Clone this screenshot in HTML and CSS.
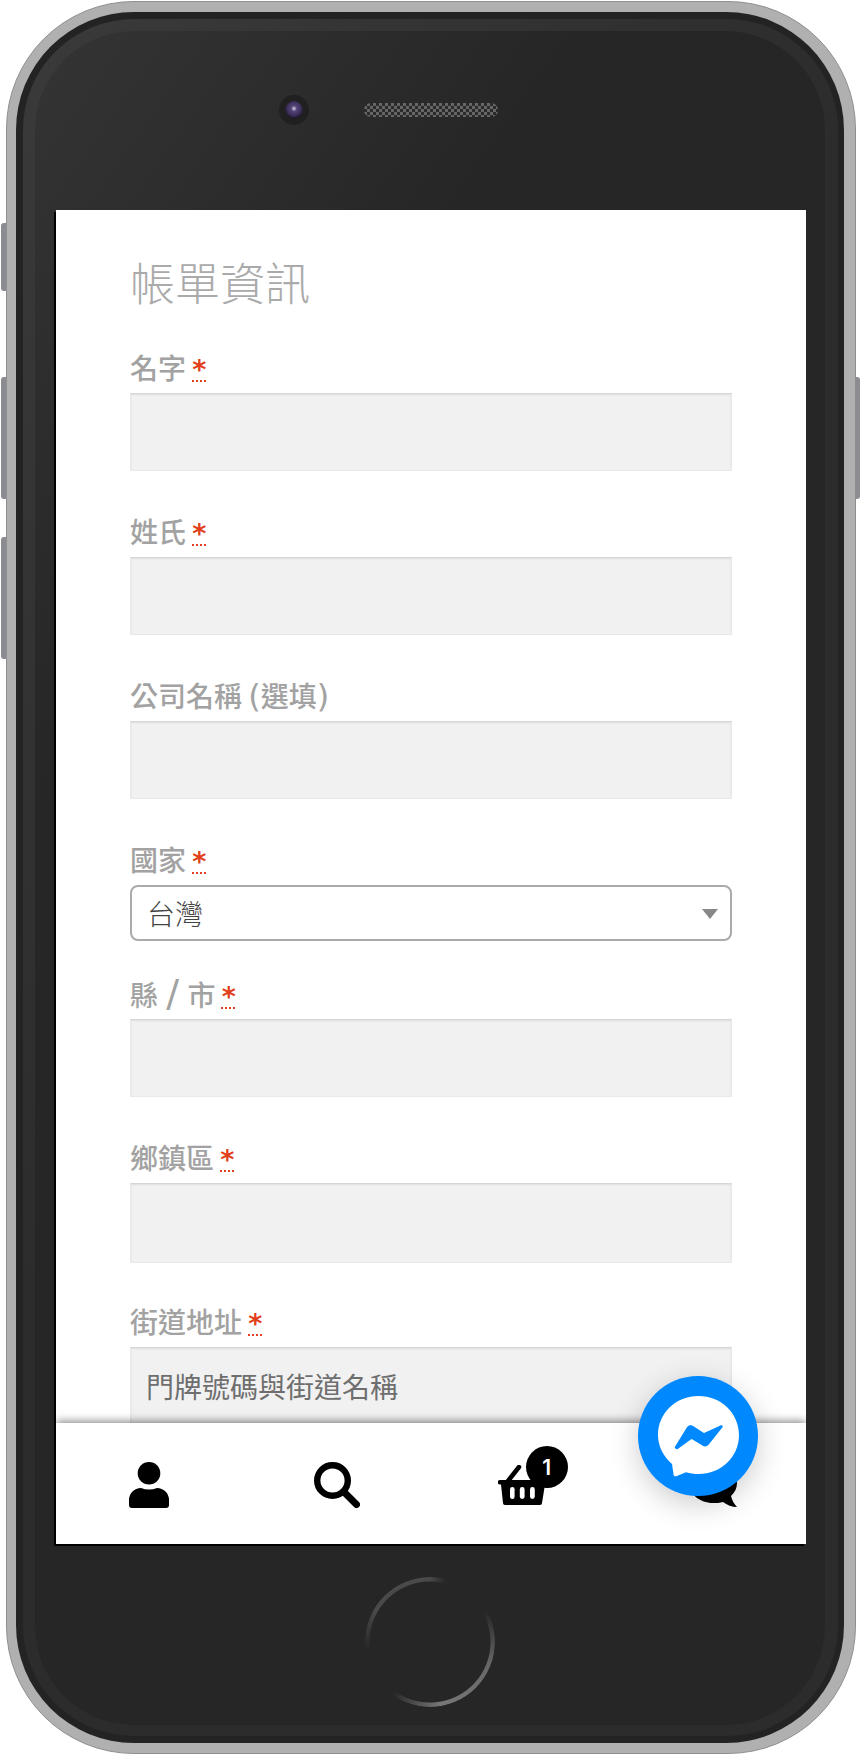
FILE: index.html
```html
<!DOCTYPE html>
<html lang="zh-Hant">
<head>
    <meta charset="UTF-8">
    <meta name="viewport" content="width=device-width, initial-scale=1.0">
    <title>帳單資訊</title>
    <link rel="stylesheet" href="styles.css">
</head>
<body>
    <div class="phone">
        <span class="side-btn side-btn-mute"></span>
        <span class="side-btn side-btn-up"></span>
        <span class="side-btn side-btn-down"></span>
        <span class="side-btn side-btn-power"></span>

        <div class="bezel">
            <div class="bezel-ring">
                <div class="face">
                    <div class="sensors">
                        <div class="camera"><span class="camera-lens"></span></div>
                        <div class="speaker"></div>
                    </div>

                    <div class="screen">
                        <form class="billing-form">
                            <h1 class="form-title">帳單資訊</h1>

                            <div class="form-group">
                                <label class="form-label" for="firstName">名字 <abbr class="required" title="必填">*</abbr></label>
                                <input class="form-input" id="firstName" type="text">
                            </div>

                            <div class="form-group">
                                <label class="form-label" for="lastName">姓氏 <abbr class="required" title="必填">*</abbr></label>
                                <input class="form-input" id="lastName" type="text">
                            </div>

                            <div class="form-group">
                                <label class="form-label" for="company">公司名稱 <span class="symbol">(</span>選填<span class="symbol">)</span></label>
                                <input class="form-input" id="company" type="text">
                            </div>

                            <div class="form-group form-group-select">
                                <label class="form-label" for="country">國家 <abbr class="required" title="必填">*</abbr></label>
                                <div class="select-wrap">
                                    <select class="form-select" id="country">
                                        <option>台灣</option>
                                    </select>
                                </div>
                            </div>

                            <div class="form-group">
                                <label class="form-label" for="county">縣 <span class="symbol symbol-slash">/</span> 市 <abbr class="required" title="必填">*</abbr></label>
                                <input class="form-input" id="county" type="text">
                            </div>

                            <div class="form-group form-group-tall">
                                <label class="form-label" for="district">鄉鎮區 <abbr class="required" title="必填">*</abbr></label>
                                <input class="form-input" id="district" type="text">
                            </div>

                            <div class="form-group">
                                <label class="form-label" for="address">街道地址 <abbr class="required" title="必填">*</abbr></label>
                                <input class="form-input" id="address" type="text" placeholder="門牌號碼與街道名稱">
                            </div>
                        </form>

                        <nav class="bottom-nav">
                            <a class="nav-item" href="#">
                                <svg width="40" height="46" viewBox="0 0 40 46">
                                    <circle cx="20" cy="11.3" r="11.3"/>
                                    <path d="M12 26Q20 29 28 26A12 12 0 0 1 40 38V43A3 3 0 0 1 37 46H3A3 3 0 0 1 0 43V38A12 12 0 0 1 12 26Z"/>
                                </svg>
                            </a>
                            <a class="nav-item nav-item-shift" href="#">
                                <svg width="46" height="46" viewBox="0 0 46 46" fill="none" stroke="#000">
                                    <circle cx="18.5" cy="18.5" r="15.3" stroke-width="6.4"/>
                                    <path d="M31 31L42.5 42.5" stroke-width="7" stroke-linecap="round"/>
                                </svg>
                            </a>
                            <a class="nav-item nav-item-cart" href="#">
                                <span class="cart-icon">
                                    <svg width="50" height="40" viewBox="0 0 50 40">
                                        <path d="M21 2L10 16" fill="none" stroke="#000" stroke-width="4.5" stroke-linecap="round"/>
                                        <path d="M2 15H48A2 2 0 0 1 48 19.500H47L44 38A2 2 0 0 1 42 40H7A2 2 0 0 1 5 38L3 19.500H2A2 2 0 0 1 2 15Z"/>
                                        <rect x="12" y="22" width="4.600" height="12" rx="2.300" fill="#fff"/>
                                        <rect x="21.800" y="22" width="4.800" height="12" rx="2.400" fill="#fff"/>
                                        <rect x="32" y="22" width="4.800" height="12" rx="2.400" fill="#fff"/>
                                    </svg>
                                    <span class="cart-badge">1</span>
                                </span>
                            </a>
                            <a class="nav-item nav-item-shift" href="#">
                                <svg width="48" height="43" viewBox="0 0 48 43">
                                    <path d="M24 0C37 0 48 8 48 19C48 24 46 28 42 32C43 36 45 40 48 43C43 43 38 41 34 38C31 39 27 39 24 39C11 39 0 30 0 19C0 8 11 0 24 0Z"/>
                                </svg>
                            </a>
                        </nav>

                        <a class="messenger-btn" href="#">
                            <svg width="81" height="81" viewBox="0 0 81 81">
                                <path d="M40.500 0C63 0 81 17 81 39C81 61 63 78 40.500 78C36 78 32 77.300 28 76.200L19 80C17 80.800 15.500 80 15.500 78L14 68C5.500 60.500 0 50.500 0 39C0 17 18 0 40.500 0Z" fill="#fff"/>
                                <path d="M18 51.500L30 32C31 30.500 33 30 34.500 31L46 38.500L63.500 30.500L50 47.500C48.500 49 46.500 49.500 45 48.500L33.500 41.500L19 52Z" fill="#0088ff" stroke="#0088ff" stroke-width="2.500" stroke-linejoin="round"/>
                            </svg>
                        </a>
                    </div>

                    <div class="home-btn"></div>
                </div>
            </div>
        </div>
    </div>
</body>
</html>
```

FILE: styles.css
```css
* {
    margin: 0;
    padding: 0;
    box-sizing: border-box;
}

body {
    font-family: "Noto Sans CJK TC", "Noto Sans", sans-serif;
    background: #fff;
    padding: 1px 6px 0;
}

/* Device frame */
.phone {
    position: relative;
    width: 850px;
    height: 1753px;
    padding: 10px 11px 10px 9px;
    background: #b0b0b0;
    border: 1px solid #8f8f8f;
    border-radius: 128px;
}

.side-btn {
    position: absolute;
    width: 5px;
    background: #8b8b92;
}

.side-btn-mute,
.side-btn-up,
.side-btn-down {
    left: -6px;
    border-radius: 3px 0 0 3px;
}

.side-btn-mute {
    top: 221px;
    height: 68px;
}

.side-btn-up {
    top: 375px;
    height: 122px;
}

.side-btn-down {
    top: 535px;
    height: 122px;
}

.side-btn-power {
    top: 375px;
    right: -5px;
    height: 122px;
    border-radius: 0 3px 3px 0;
}

.bezel {
    height: 100%;
    padding: 7px 6px 7px 7px;
    background: #232323;
    border-radius: 118px;
}

.bezel-ring {
    height: 100%;
    padding: 12px 13px 11px 12px;
    background: linear-gradient(125deg, #3a3a3a 0, #2c2c2c 45%, #2c2c2c 100%);
    border-radius: 111px;
}

.face {
    position: relative;
    height: 100%;
    padding: 179px 19px 0 21px;
    background: linear-gradient(125deg, #343434 0, #262626 28%);
    border-radius: 99px;
}

.sensors {
    position: absolute;
    top: 64px;
    left: 244px;
    display: flex;
    align-items: center;
    gap: 55px;
}

.camera {
    display: flex;
    align-items: center;
    justify-content: center;
    width: 30px;
    height: 30px;
    background: #202020;
    border-radius: 50%;
}

.camera-lens {
    width: 18px;
    height: 18px;
    background: radial-gradient(circle at 50% 42%, #b9b2c6 0, #b9b2c6 6%, #54457a 20%, #3d2f5c 50%, #1a1722 72%);
    border-radius: 50%;
}

.speaker {
    width: 134px;
    height: 14px;
    background: repeating-conic-gradient(#666 0 25%, #2b2b2b 0 50%) 0 0 / 6px 6px;
    border-radius: 7px;
}

.home-btn {
    position: absolute;
    top: 1546px;
    left: 330px;
    width: 130px;
    height: 130px;
    background: conic-gradient(#4a4a4a 0, transparent 15deg, transparent 60deg, #666 110deg, #777 170deg, transparent 217deg, transparent 262deg, #4a4a4a 300deg, #4a4a4a 360deg);
    border-radius: 50%;
    -webkit-mask: radial-gradient(circle, transparent 60px, #000 61px);
    mask: radial-gradient(circle, transparent 60px, #000 61px);
}

/* Screen */
.screen {
    position: relative;
    width: 750px;
    height: 1334px;
    overflow: hidden;
    background: #fff;
    box-shadow: -2px 2px 0 #000;
}

.billing-form {
    padding: 42px 74px 0;
}

.form-title {
    margin-bottom: 37px;
    font-size: 45px;
    font-weight: 300;
    line-height: 60px;
    color: #aaa;
}

.form-group {
    margin-bottom: 42px;
}

.form-group-select {
    margin-bottom: 34px;
}

.form-group-tall {
    margin-bottom: 40px;
}

.form-group-tall .form-input {
    height: 80px;
}

.form-label {
    display: block;
    height: 44px;
    font-size: 28px;
    font-weight: 500;
    line-height: 36px;
    color: #a2a2a2;
}

.symbol {
    font-family: "DejaVu Sans", sans-serif;
    font-size: 32px;
    font-weight: 400;
}

.symbol-slash {
    margin: 0 2px;
    font-size: 38px;
}

.required {
    font-family: "DejaVu Sans", sans-serif;
    font-size: 27px;
    font-weight: 700;
    color: #e2401c;
    text-decoration: underline dotted 2px;
}

.form-input {
    display: block;
    width: 100%;
    height: 78px;
    padding: 0 15px;
    font-family: inherit;
    font-size: 28px;
    color: #444;
    background: #f1f1f1;
    border: 1px solid #e9e9e9;
    border-top: 1px solid #d6d6d6;
    box-shadow: inset 0 1px 2px rgba(0, 0, 0, 0.08);
    outline: none;
}

.form-input::placeholder {
    color: #6e6e6e;
    opacity: 1;
}

.select-wrap {
    position: relative;
}

.select-wrap::after {
    content: "";
    position: absolute;
    top: 24px;
    right: 14px;
    border-top: 10px solid #888;
    border-left: 8px solid transparent;
    border-right: 8px solid transparent;
}

.form-select {
    display: block;
    width: 100%;
    height: 56px;
    padding: 0 15px;
    font-family: inherit;
    font-size: 28px;
    font-weight: 300;
    color: #444;
    background: #fff;
    border: 2px solid #aaa;
    border-radius: 8px;
    -webkit-appearance: none;
    appearance: none;
    outline: none;
}

/* Bottom nav */
.bottom-nav {
    position: absolute;
    left: 0;
    right: 0;
    bottom: 0;
    display: flex;
    height: 121px;
    padding-top: 3px;
    background: #fff;
    box-shadow: 0 -1px 9px rgba(0, 0, 0, 0.55);
}

.nav-item {
    display: flex;
    flex: 1;
    align-items: center;
    justify-content: center;
    text-decoration: none;
}

.nav-item-shift {
    padding-left: 3px;
}

.nav-item-cart {
    padding-right: 2px;
}

.cart-icon {
    position: relative;
    display: flex;
}

.cart-badge {
    position: absolute;
    top: -19px;
    left: 28px;
    display: flex;
    align-items: center;
    justify-content: center;
    width: 42px;
    height: 42px;
    font-family: "Inter", sans-serif;
    font-size: 21px;
    font-weight: 600;
    color: #fff;
    background: #000;
    border-radius: 50%;
}

.messenger-btn {
    position: absolute;
    right: 48px;
    bottom: 48px;
    display: flex;
    align-items: center;
    justify-content: center;
    width: 120px;
    height: 120px;
    background: #0088ff;
    border-radius: 50%;
    box-shadow: 0 8px 30px rgba(0, 0, 0, 0.2);
}
```
